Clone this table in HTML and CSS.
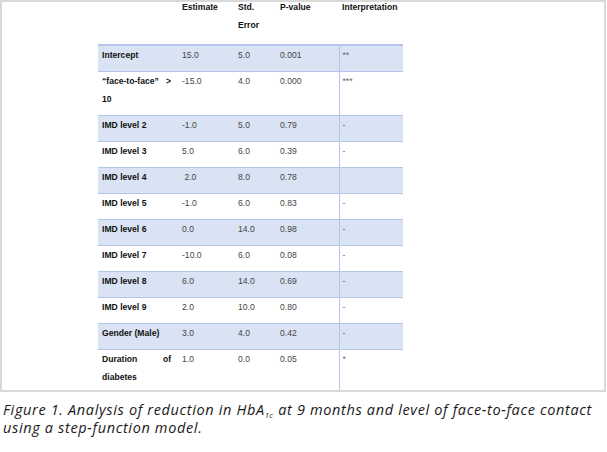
FILE: index.html
```html
<!DOCTYPE html>
<html>
<head>
<meta charset="utf-8">
<link rel="stylesheet" href="styles.css">
</head>
<body>
<div class="frame">
  <table class="stats">
    <colgroup>
      <col class="c-label"><col class="c-est"><col class="c-std"><col class="c-p"><col class="c-int">
    </colgroup>
    <thead>
      <tr>
        <th></th>
        <th>Estimate</th>
        <th>Std. Error</th>
        <th>P-value</th>
        <th>Interpretation</th>
      </tr>
    </thead>
    <tbody>
      <tr class="shade"><td class="lbl">Intercept</td><td>15.0</td><td>5.0</td><td>0.001</td><td class="int">**</td></tr>
      <tr><td class="lbl">“face-to-face” &gt; 10</td><td>-15.0</td><td>4.0</td><td>0.000</td><td class="int">***</td></tr>
      <tr class="shade"><td class="lbl">IMD level 2</td><td>-1.0</td><td>5.0</td><td>0.79</td><td class="int">-</td></tr>
      <tr><td class="lbl">IMD level 3</td><td>5.0</td><td>6.0</td><td>0.39</td><td class="int">-</td></tr>
      <tr class="shade"><td class="lbl">IMD level 4</td><td>&nbsp;2.0</td><td>8.0</td><td>0.78</td><td class="int"></td></tr>
      <tr><td class="lbl">IMD level 5</td><td>-1.0</td><td>6.0</td><td>0.83</td><td class="int">-</td></tr>
      <tr class="shade"><td class="lbl">IMD level 6</td><td>0.0</td><td>14.0</td><td>0.98</td><td class="int">-</td></tr>
      <tr><td class="lbl">IMD level 7</td><td>-10.0</td><td>6.0</td><td>0.08</td><td class="int">-</td></tr>
      <tr class="shade"><td class="lbl">IMD level 8</td><td>6.0</td><td>14.0</td><td>0.69</td><td class="int">-</td></tr>
      <tr><td class="lbl">IMD level 9</td><td>2.0</td><td>10.0</td><td>0.80</td><td class="int">-</td></tr>
      <tr class="shade"><td class="lbl">Gender (Male)</td><td>3.0</td><td>4.0</td><td>0.42</td><td class="int">-</td></tr>
      <tr><td class="lbl">Duration of diabetes</td><td>1.0</td><td>0.0</td><td>0.05</td><td class="int">*</td></tr>
    </tbody>
  </table>
</div>
<p class="caption">Figure 1. Analysis of reduction in HbA<span class="sub">1c</span> at 9 months and level of face-to-face contact<br>using a step-function model.</p>
</body>
</html>
```
FILE: styles.css
```css
html, body {
  margin: 0;
  padding: 0;
  background: #ffffff;
}

.frame {
  box-sizing: border-box;
  width: 606px;
  height: 392px;
  border: 2px solid #d9d9d9;
  overflow: hidden;
  padding-left: 96px;
}

.stats {
  margin-top: -3px;
  border-collapse: collapse;
  table-layout: fixed;
  width: 305px;
  font-family: "Liberation Sans", Arial, sans-serif;
  font-size: 8.6px;
}

.c-label { width: 80px; }
.c-est { width: 56px; }
.c-std { width: 42px; }
.c-p { width: 63px; }
.c-int { width: 64px; }

.stats th {
  text-align: left;
  vertical-align: top;
  font-weight: bold;
  color: #111111;
  line-height: 17.5px;
  padding: 0 4px 10px 4px;
}

.stats th:last-child {
  padding-left: 3px;
}

.stats td {
  vertical-align: top;
  line-height: 18px;
  padding: 0 4px 7px 4px;
  color: #444444;
  border-top: 1px solid #b4c6e7;
}

.stats tbody tr:first-child td {
  border-top: 2px solid #b4c6e7;
}

.stats td.lbl {
  font-weight: bold;
  color: #111111;
  text-align: justify;
  padding-right: 7px;
}

.stats td.int {
  border-left: 1px solid #b4c6e7;
  padding-left: 3px;
  color: #666666;
}

.stats tr.shade td {
  background: #dae3f3;
}

.caption {
  margin: 9px 0 0 3px;
  width: 602px;
  font-family: "Open Sans", Lato, sans-serif;
  font-style: italic;
  font-size: 14.5px;
  letter-spacing: 0.65px;
  line-height: 18px;
  color: #1a1a1a;
}

.caption .sub {
  font-size: 8px;
  letter-spacing: 0;
  line-height: 0;
  vertical-align: -3px;
  margin-right: 1px;
}
```
